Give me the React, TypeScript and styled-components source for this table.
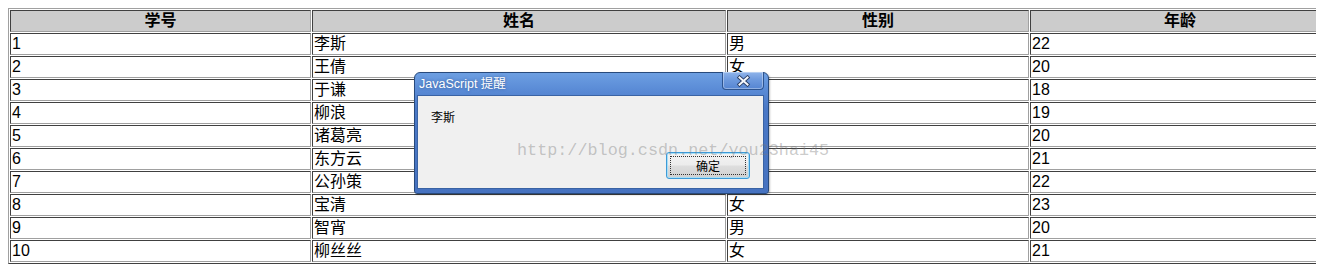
import React from 'react';
import styled, {createGlobalStyle} from 'styled-components';

const GlobalStyle = createGlobalStyle`
  html, body {
    overflow: hidden;
  }
  body {
    margin: 8px;
    background: #fff;
    font-family: "Liberation Sans", "Noto Sans CJK SC", sans-serif;
  }
`;

const Page = styled.div`
  position: relative;
`;

const Table = styled.table`
  width: 1324px;
  table-layout: fixed;
  border-collapse: separate;
  border-spacing: 1px;
  border: 1px solid;
  border-color: #a0a0a0 #404040 #404040 #a0a0a0;
  font-size: 16px;
  color: #000;
`;

const Th = styled.th<{w?: number}>`
  box-sizing: border-box;
  width: ${(p) => (p.w ? `${p.w}px` : 'auto')};
  height: 22px;
  padding: 0 1px;
  line-height: 20px;
  background: #cccccc;
  font-weight: bold;
  text-align: center;
  border: 1px solid;
  border-color: #404040 #a0a0a0 #a0a0a0 #404040;
`;

const Td = styled.td`
  box-sizing: border-box;
  height: 22px;
  padding: 0 1px;
  line-height: 20px;
  text-align: left;
  white-space: nowrap;
  overflow: hidden;
  border: 1px solid;
  border-color: #404040 #a0a0a0 #a0a0a0 #404040;
`;

const Dialog = styled.div`
  position: absolute;
  left: 406px;
  top: 64px;
  width: 355px;
  height: 122px;
  box-sizing: border-box;
  display: flex;
  flex-direction: column;
  padding: 0 4px 4px 2px;
  border: 1px solid #284a7c;
  border-radius: 6px 6px 3px 3px;
  background: linear-gradient(180deg, #6d9fe2 0%, #5a8bd6 14%, #4a78c6 30%, #4672c0 100%);
  box-shadow: 1px 1px 2px rgba(0, 0, 0, 0.25);
`;

const TitleBar = styled.div`
  display: flex;
  justify-content: space-between;
  align-items: flex-start;
  height: 22px;
`;

const Title = styled.span`
  padding: 3px 0 0 2px;
  color: #fff;
  font-size: 12.5px;
  line-height: 16px;
  text-shadow: 0 0 3px rgba(30, 60, 110, 0.6);
`;

const CloseButton = styled.div`
  display: flex;
  align-items: center;
  justify-content: center;
  width: 42px;
  height: 18px;
  margin-top: -1px;
  box-sizing: border-box;
  border: 1px solid #2d5490;
  border-top: none;
  border-radius: 0 0 4px 4px;
  background: linear-gradient(180deg, #8fb4ea 0%, #6e9ade 45%, #5585d2 100%);
  box-shadow: inset 0 0 0 1px rgba(255, 255, 255, 0.35);
`;

const Body = styled.div`
  height: 94px;
  box-sizing: border-box;
  display: flex;
  flex-direction: column;
  justify-content: space-between;
  padding: 14px 13px 9px 13px;
  background: #f0f0f0;
  border: 1px solid #3a63a4;
  font-size: 12px;
  color: #000;
`;

const Message = styled.div`
  line-height: 16px;
`;

const ButtonRow = styled.div`
  display: flex;
  justify-content: flex-end;
`;

const OkButton = styled.button`
  position: relative;
  width: 84px;
  height: 27px;
  padding: 0;
  border: 1px solid #3c9ad7;
  border-radius: 3px;
  background: linear-gradient(180deg, #f4f4f4 0%, #ececec 48%, #dedede 52%, #d0d0d0 100%);
  box-shadow: inset 0 0 0 1px #a8def7;
  font-family: "Liberation Sans", "Noto Sans CJK SC", sans-serif;
  font-size: 12px;
  color: #000;
  &::after {
    content: '';
    position: absolute;
    inset: 3px;
    border: 1px dotted #333;
  }
`;

const Watermark = styled.div`
  position: absolute;
  left: 509px;
  top: 133px;
  font-family: "Liberation Mono", monospace;
  font-size: 16.8px;
  line-height: 20px;
  color: rgba(120, 120, 120, 0.4);
  white-space: nowrap;
  pointer-events: none;
`;

const CloseIcon = () => (
  <svg width="15" height="12" viewBox="0 0 15 12">
    <path d="M3.5 2.5 L11.5 9.5 M11.5 2.5 L3.5 9.5" stroke="#2a3f66" strokeWidth="3.8" strokeLinecap="square" />
    <path d="M3.5 2.5 L11.5 9.5 M11.5 2.5 L3.5 9.5" stroke="#f4f7fc" strokeWidth="2" strokeLinecap="square" />
  </svg>
);

const students = [
  {id: 1, name: '李斯', sex: '男', age: 22},
  {id: 2, name: '王倩', sex: '女', age: 20},
  {id: 3, name: '于谦', sex: '男', age: 18},
  {id: 4, name: '柳浪', sex: '男', age: 19},
  {id: 5, name: '诸葛亮', sex: '男', age: 20},
  {id: 6, name: '东方云', sex: '男', age: 21},
  {id: 7, name: '公孙策', sex: '男', age: 22},
  {id: 8, name: '宝清', sex: '女', age: 23},
  {id: 9, name: '智宵', sex: '男', age: 20},
  {id: 10, name: '柳丝丝', sex: '女', age: 21},
];

export default function App() {
  return (
    <Page>
      <GlobalStyle />
      <Table>
        <thead>
          <tr>
            <Th w={301}>学号</Th>
            <Th w={414}>姓名</Th>
            <Th w={302}>性别</Th>
            <Th>年龄</Th>
          </tr>
        </thead>
        <tbody>
          {students.map((s) => (
            <tr key={s.id}>
              <Td>{s.id}</Td>
              <Td>{s.name}</Td>
              <Td>{s.sex}</Td>
              <Td>{s.age}</Td>
            </tr>
          ))}
        </tbody>
      </Table>
      <Dialog>
        <TitleBar>
          <Title>JavaScript 提醒</Title>
          <CloseButton>
            <CloseIcon />
          </CloseButton>
        </TitleBar>
        <Body>
          <Message>李斯</Message>
          <ButtonRow>
            <OkButton>确定</OkButton>
          </ButtonRow>
        </Body>
      </Dialog>
      <Watermark>http://blog.csdn.net/you23hai45</Watermark>
    </Page>
  );
}
